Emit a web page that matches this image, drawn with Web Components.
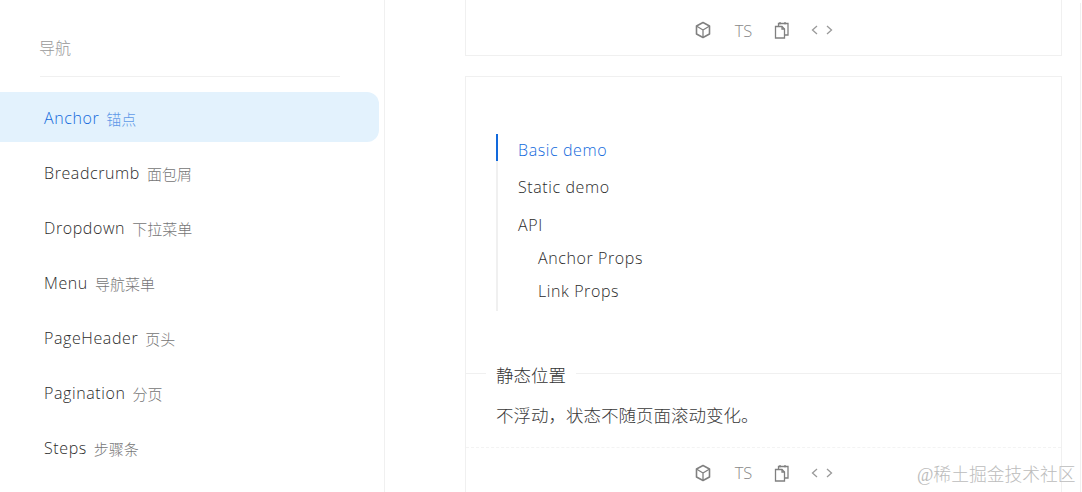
<!DOCTYPE html>
<html lang="zh"><head><meta charset="utf-8"><style>
html,body{margin:0;height:492px;overflow:hidden;background:#fff}
body{font-family:"Open Sans","Noto Sans CJK SC",sans-serif;color:#333}
</style></head><body>
<demo-page>
<side-nav slot="side" heading="导航">
<nav-item active name="Anchor" sub="锚点"></nav-item>
<nav-item name="Breadcrumb" sub="面包屑"></nav-item>
<nav-item name="Dropdown" sub="下拉菜单"></nav-item>
<nav-item name="Menu" sub="导航菜单"></nav-item>
<nav-item name="PageHeader" sub="页头"></nav-item>
<nav-item name="Pagination" sub="分页"></nav-item>
<nav-item name="Steps" sub="步骤条"></nav-item>
</side-nav>
<demo-card variant="top"></demo-card>
<demo-card variant="main">
<anchor-list slot="demo">
<anchor-link active>Basic demo</anchor-link>
<anchor-link>Static demo</anchor-link>
<anchor-link>API</anchor-link>
<anchor-link sub>Anchor Props</anchor-link>
<anchor-link sub>Link Props</anchor-link>
</anchor-list>
<span slot="title">静态位置</span>
<span slot="desc">不浮动，状态不随页面滚动变化。</span>
</demo-card>
</demo-page>
<script>
const def=(n,html)=>customElements.define(n,class extends HTMLElement{
connectedCallback(){if(this.shadowRoot)return;const r=this.attachShadow({mode:'open'});r.innerHTML=typeof html==='function'?html(this):html;}
});
def('demo-page',`<style>
:host{display:flex;width:1082px;height:492px;overflow:hidden;position:relative}
main{flex:1;min-width:0;padding-left:80px;display:flex;flex-direction:column;gap:20px}
.rail{position:absolute;left:1080px;top:3px;bottom:0;width:1px;background:#f0f0f0}
.mark{position:absolute;left:917px;top:463px;font:17.800px/24px "Liberation Serif","Noto Sans CJK SC",serif;font-weight:300;color:#bcbcbc;white-space:nowrap}
</style><slot name="side"></slot><main><slot></slot></main><div class="rail"></div><div class="mark">@稀土掘金技术社区</div>`);
def('side-nav',h=>`<style>
:host{display:block;flex:0 0 385px;box-sizing:border-box;height:492px;border-right:1px solid #f0f0f0;overflow:hidden}
h4{margin:0 0 0 40px;padding:38px 0 17px;width:300px;border-bottom:1px solid #f0f0f0;font:300 16px/21px "Open Sans","Noto Sans CJK SC",sans-serif;color:#999;text-indent:-1px}
.list{display:flex;flex-direction:column;gap:5px;margin-top:15px;padding-right:5px}
</style><h4>${h.getAttribute('heading')}</h4><div class="list"><slot></slot></div>`);
def('nav-item',h=>`<style>
:host{display:flex;align-items:center;height:50px;padding-left:44px;border-radius:0 12px 12px 0;color:#2b2b2b;font-size:16px;${h.hasAttribute('active')?'background:#e3f2fd;color:#1269dc;':''}}
b{font-weight:300;letter-spacing:.6px;position:relative;top:1px}
i{font-style:normal;font-size:15px;font-weight:300;margin-left:7px;opacity:.65;position:relative;top:1px}
</style><b>${h.getAttribute('name')}</b><i>${h.getAttribute('sub')}</i>`);
const icons=`<svg class="cube" width="18" height="18" viewBox="0 0 18 18" fill="none" stroke="#808080" stroke-width="1.600" stroke-linejoin="round"><path d="M9 1.500l6.500 3.500v8L9 16.500 2.500 13V5z"/><path d="M2.800 5.200L9 9l6.200-3.800M9 9v7.200" stroke-width="1.300"/></svg>
<span class="ts">TS</span>
<svg class="copy" width="18" height="18" viewBox="0 0 18 18" fill="none" stroke="#808080" stroke-width="1.300"><path d="M2.500 5.500h6.500l2.500 2.500v9h-9z"/><path d="M5.500 5V2.500h9.500V14h-3.500M7 1v2.500M12 1v2.500M9 5.500V8h2.500"/></svg>
<svg class="code" width="22" height="12" viewBox="0 0 22 12" fill="none" stroke="#999" stroke-width="1.300"><path d="M6 2L1.500 6 6 10M16 2l4.500 4L16 10"/></svg>`;
def('demo-card',h=>{const top=h.getAttribute('variant')==='top';return `<style>
:host{display:block;width:597px;box-sizing:border-box;border:1px solid #f0f0f0;flex:none;${top?'border-top:0;height:56px;':'height:500px;'}}
.demo{height:296px;padding:57px 30px 0;box-sizing:border-box}
.head{display:flex;align-items:center;height:0;font-size:17.500px;font-weight:300;color:#333}
.head::before{content:"";width:20px;height:1px;background:#f0f0f0}
.head::after{content:"";flex:1;height:1px;background:#f0f0f0}
.head span{padding:3px 10px 0}
.desc{padding:0 30px;margin-top:30px;font-size:17.500px;font-weight:300;line-height:24px;color:#3a3a3a}
.actions{display:flex;align-items:center;justify-content:center;height:${top?55:50}px;box-sizing:border-box;${top?'padding-top:5px;':'margin-top:20px;border-top:1px dashed #f3f3f3;'}}
.actions svg,.actions .ts{flex:none}
.actions .ts{font-size:16.500px;font-weight:300;color:#888;margin:0 21px 0 23px}
.actions .code{margin-left:20px}
</style>${top?'':`<div class="demo"><slot name="demo"></slot></div><div class="head"><span><slot name="title"></slot></span></div><div class="desc"><slot name="desc"></slot></div>`}<div class="actions">${icons}</div>`});
def('anchor-list',`<style>
:host{display:block;position:relative;width:300px;height:177px;border-left:2px solid #f0f0f0;box-sizing:border-box}
.ink{position:absolute;left:-2px;top:0;width:2px;height:27px;background:#1269dc}
</style><div class="ink"></div><slot></slot>`);
def('anchor-link',h=>{const a=h.hasAttribute('active'),s=h.hasAttribute('sub'),t=h.textContent;
const pad=s?'4.500px 0 4.500px 40px':t==='API'?'3.500px 0 4.500px 20px':t==='Static demo'?'3.500px 0 10.500px 20px':'3.500px 0 9.500px 20px';
return `<style>
:host{display:block;font-size:16px;font-weight:300;letter-spacing:.6px;line-height:24px;padding:${pad};color:${a?'#1269dc':'#2b2b2b'}}
</style><slot></slot>`});
</script></body></html>
